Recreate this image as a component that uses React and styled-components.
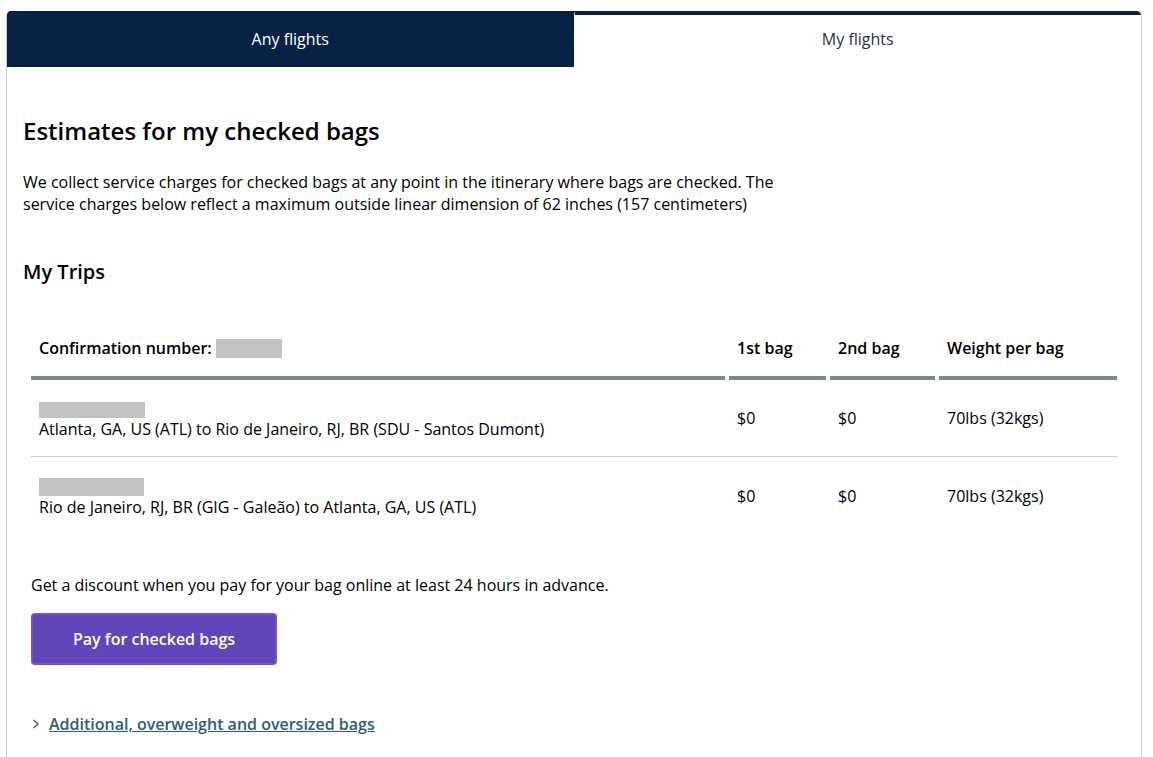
import React, { useState } from "react";
import styled, { createGlobalStyle } from "styled-components";

const tabs = ["Any flights", "My flights"];

const trips = [
  {
    route: "Atlanta, GA, US (ATL) to Rio de Janeiro, RJ, BR (SDU - Santos Dumont)",
    first: "$0",
    second: "$0",
    weight: "70lbs (32kgs)",
    dateWidth: 106,
    dateHeight: 16,
  },
  {
    route: "Rio de Janeiro, RJ, BR (GIG - Galeão) to Atlanta, GA, US (ATL)",
    first: "$0",
    second: "$0",
    weight: "70lbs (32kgs)",
    dateWidth: 105,
    dateHeight: 18,
  },
];

const App = () => {
  const [active, setActive] = useState("My flights");

  return (
    <>
      <GlobalStyle />
      <Card>
        <TabList role="tablist">
          {tabs.map((tab) => (
            <Tab
              key={tab}
              type="button"
              role="tab"
              aria-selected={tab === active}
              $active={tab === active}
              onClick={() => setActive(tab)}
            >
              {tab}
            </Tab>
          ))}
        </TabList>

        <Panel role="tabpanel">
          <Title>Estimates for my checked bags</Title>
          <Intro>
            We collect service charges for checked bags at any point in the
            itinerary where bags are checked. The service charges below reflect
            a maximum outside linear dimension of 62 inches (157 centimeters)
          </Intro>
          <Subtitle>My Trips</Subtitle>

          <Trips>
            <Table>
              <colgroup>
                <col />
                <Col $width={101} />
                <Col $width={109} />
                <Col $width={178} />
              </colgroup>
              <thead>
                <tr>
                  <Th scope="col">
                    <ThInner>
                      Confirmation number: <Redacted $width={66} $height={19} />
                    </ThInner>
                  </Th>
                  <Th scope="col"><ThInner>1st bag</ThInner></Th>
                  <Th scope="col"><ThInner>2nd bag</ThInner></Th>
                  <Th scope="col"><ThInner>Weight per bag</ThInner></Th>
                </tr>
              </thead>
              <tbody>
                {trips.map((trip) => (
                  <Row key={trip.route}>
                    <Td>
                      <DateLine>
                        <Redacted
                          $width={trip.dateWidth}
                          $height={trip.dateHeight}
                        />
                      </DateLine>
                      {trip.route}
                    </Td>
                    <Td>{trip.first}</Td>
                    <Td>{trip.second}</Td>
                    <Td>{trip.weight}</Td>
                  </Row>
                ))}
              </tbody>
            </Table>

            <Discount>
              Get a discount when you pay for your bag online at least 24 hours
              in advance.
            </Discount>
            <PayButton type="button">Pay for checked bags</PayButton>

            <MoreLink href="#additional-bags">
              <Chevron viewBox="0 0 8 10" aria-hidden="true">
                <path d="M1.5 1 L6 5 L1.5 9" />
              </Chevron>
              <span>Additional, overweight and oversized bags</span>
            </MoreLink>
          </Trips>
        </Panel>
      </Card>
    </>
  );
};

export default App;

const GlobalStyle = createGlobalStyle`
  * {
    box-sizing: border-box;
  }

  body {
    margin: 0;
    background: #fff;
    color: #000;
    font-family: "Open Sans", "Noto Sans", sans-serif;
    font-size: 16px;
    font-weight: 400;
    line-height: 22px;
  }
`;

const Card = styled.main`
  margin: 11px 11px 0 6px;
  border: 1px solid #ccc;
  border-top: 0;
  border-radius: 5px 5px 0 0;
  overflow: hidden;
`;

const TabList = styled.div`
  display: flex;
`;

const Tab = styled.button`
  flex: 1;
  height: 56px;
  padding: 0 0 4px;
  border: 0;
  border-top: 4px solid #082245;
  background: ${(props) => (props.$active ? "#fff" : "#082245")};
  color: ${(props) => (props.$active ? "#2b2f45" : "#fff")};
  font: inherit;
  cursor: pointer;

  &:not(:last-child) {
    border-right: 1px solid #fff;
  }
`;

const Panel = styled.section`
  padding: 48px 16px;
`;

const Title = styled.h1`
  margin: 0;
  font-size: 24px;
  font-weight: 600;
  line-height: 32px;
`;

const Intro = styled.p`
  max-width: 768px;
  margin: 24px 0 0;
`;

const Subtitle = styled.h2`
  margin: 43px 0 0;
  font-size: 20px;
  font-weight: 600;
  line-height: 28px;
`;

const Trips = styled.div`
  padding: 0 8px;
`;

const Table = styled.table`
  width: 100%;
  margin-top: 34px;
  border-collapse: separate;
  border-spacing: 0;
  table-layout: fixed;
`;

const Col = styled.col`
  width: ${(props) => props.$width}px;
`;

const Th = styled.th`
  padding: 0 4px 0 0;
  font-weight: 600;
  text-align: left;

  &:last-child {
    padding-right: 0;
  }
`;

const ThInner = styled.div`
  padding: 17px 8px;
  border-bottom: 4px solid #7d8991;
`;

const Td = styled.td`
  padding: 16px 8px;
  vertical-align: middle;
`;

const Row = styled.tr`
  &:not(:last-child) > td {
    border-bottom: 1px solid #ccc;
  }

  & + & > td {
    padding-top: 17px;
  }
`;

const DateLine = styled.div`
  display: flex;
  align-items: flex-end;
  height: 22px;
`;

const Redacted = styled.span`
  display: inline-block;
  width: ${(props) => props.$width}px;
  height: ${(props) => props.$height}px;
  background: #c3c3c3;
  vertical-align: -4px;
`;

const Discount = styled.p`
  margin: 40px 0 0;
`;

const PayButton = styled.button`
  display: block;
  margin-top: 17px;
  padding: 13px 40px;
  border: 2px solid #7557c5;
  border-radius: 4px;
  background: #6244bb;
  color: #fff;
  font: inherit;
  font-weight: 600;
  cursor: pointer;
`;

const MoreLink = styled.a`
  display: inline-flex;
  align-items: center;
  gap: 9px;
  margin-top: 48px;
  padding-left: 1px;
  color: #2c5c7e;
  font-weight: 600;
  text-decoration: none;

  span {
    text-decoration: underline;
    text-decoration-thickness: 1px;
  }
`;

const Chevron = styled.svg`
  width: 8px;
  height: 10px;
  fill: none;
  stroke: currentColor;
  stroke-width: 1.3;
`;
